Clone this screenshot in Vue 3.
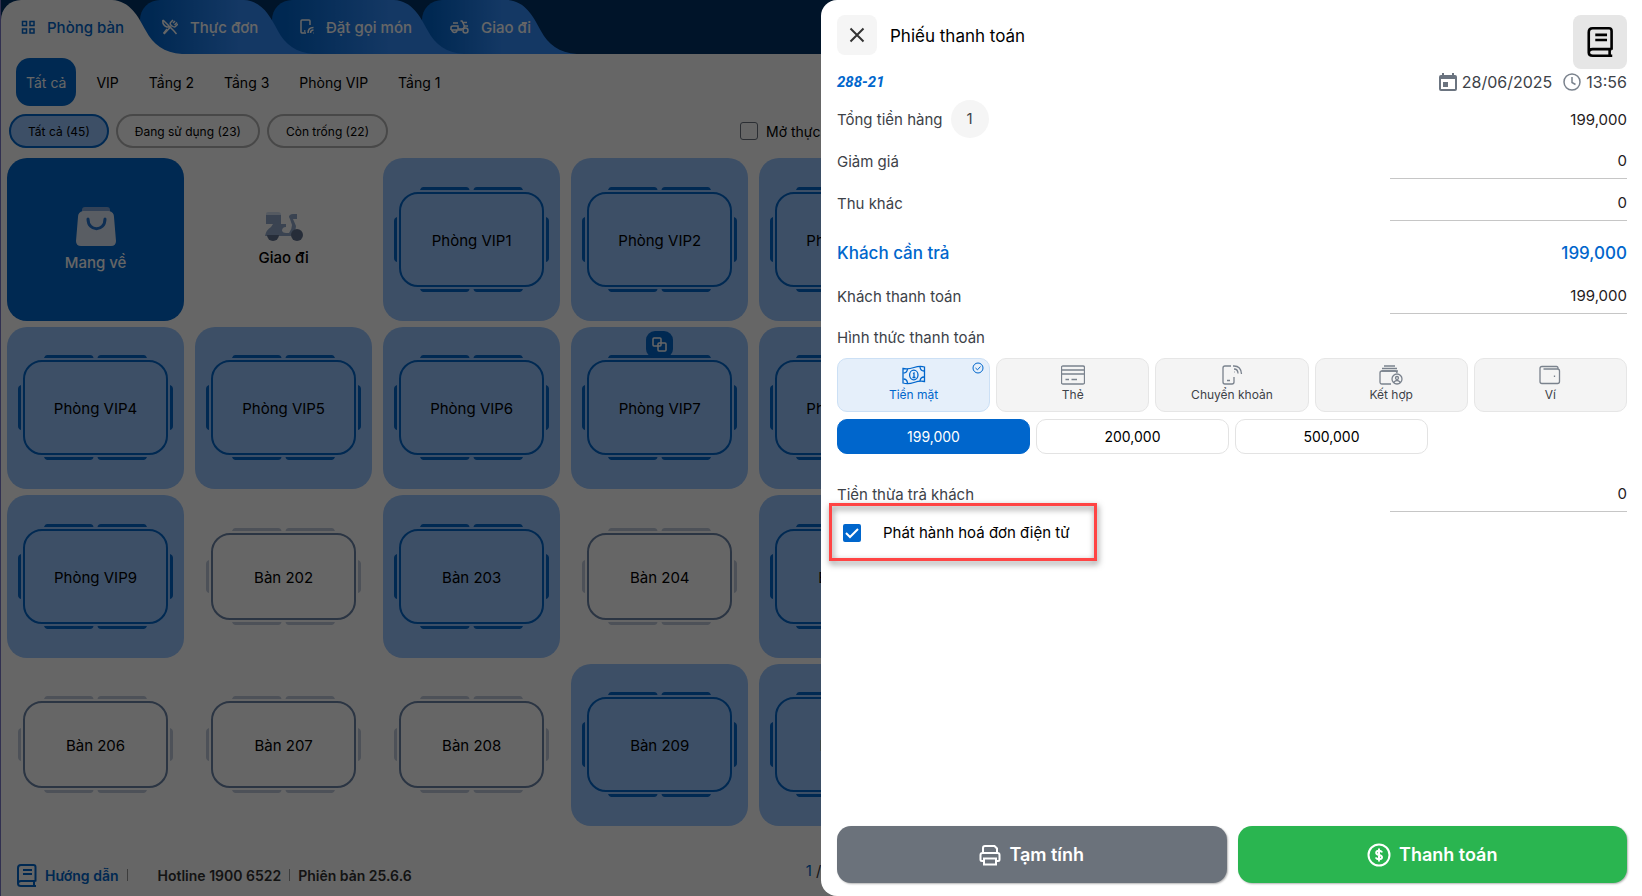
<template>
  <div class="page">
    <div class="main">
      <nav class="tabs">
        <button
          v-for="(tab, i) in tabs"
          :key="tab.name"
          type="button"
          :class="['tab', 'tab-' + tab.size, { active: i === 0 }]"
          :style="{ zIndex: 10 - i }"
        >
          <svg class="tab-tail" viewBox="0 0 76 54" aria-hidden="true">
            <path d="M0 0H6C24 1 32 16 40 31C47 44 58 53 76 54H0Z" />
          </svg>
          <svg class="tab-icon" :style="{ width: tab.w + 'px' }" :viewBox="`0 0 ${tab.w} 16`" aria-hidden="true">
            <path v-for="d in tab.paths" :key="d" :d="d" />
          </svg>
          <span>{{ tab.name }}</span>
        </button>
      </nav>

      <div class="areas">
        <button v-for="(area, i) in areas" :key="area" type="button" :class="{ selected: i === 0 }">{{ area }}</button>
      </div>

      <div class="filters">
        <button v-for="(f, i) in filters" :key="f" type="button" :class="{ selected: i === 0 }">{{ f }}</button>
        <label class="open-menu"><input type="checkbox" />Mở thực</label>
      </div>

      <div class="tables">
        <button type="button" class="tile takeaway">
          <svg width="40" height="39" viewBox="0 0 40 39" aria-hidden="true">
            <path d="M9 0H31Q34 0 34 3V6H6V3Q6 0 9 0Z" fill="#7fa6d9" />
            <path d="M7 4H33Q38 5 38 10L40 34Q40 39 35 39H5Q0 39 0 34L2 10Q2 5 7 4Z" fill="#dfe9f8" />
            <path d="M12 12C12 25 29 25 29 12" fill="none" stroke="#2474cf" stroke-width="3" stroke-linecap="round" />
          </svg>
          <span>Mang về</span>
        </button>
        <button type="button" class="tile delivery">
          <svg width="38" height="29" viewBox="0 0 38 29" aria-hidden="true">
            <path d="M1 2Q1 0 3 0H13Q16 0 16 3H1Z" fill="#d5e1f2" />
            <path d="M1 3H16V12H21V15Q17 15 17 19Q18 21 21 21H24Q27 17 27 13L25 7Q23 4 25 3Q26 2 28 2H32V7H28L31 14Q31 19 26 24H0Q1 18 6 15L8 12H1Z" fill="#91a9cb" />
            <path d="M2 23H14A6 6 0 0 1 2 23Z" fill="#60728e" />
            <circle cx="32" cy="23" r="6" fill="#60728e" />
          </svg>
          <span>Giao đi</span>
        </button>
        <button
          v-for="t in tables"
          :key="t.name"
          type="button"
          :class="['tile', t.busy ? 'busy' : 'free']"
        >
          <svg v-if="t.busy" class="shape" width="155" height="105" viewBox="0 0 155 105" aria-hidden="true">
            <rect x="6" y="6" width="143" height="93" rx="18" />
            <path d="M26 3Q27 0 29 0H72Q75 0 75.500 3ZM79.500 3Q80 0 83 0H126Q128 0 129 3ZM26 102Q27 105 29 105H72Q75 105 75.500 102ZM79.500 102Q80 105 83 105H126Q128 105 129 102ZM3 30V75Q0 74 0 71V34Q0 31 3 30ZM152 30V75Q155 74 155 71V34Q155 31 152 30Z" />
          </svg>
          <svg v-else class="shape" width="155" height="97" viewBox="0 0 155 97" aria-hidden="true">
            <rect x="6" y="6" width="143" height="85" rx="18" />
            <path d="M26 3Q27 0 29 0H72Q75 0 75.500 3ZM79.500 3Q80 0 83 0H126Q128 0 129 3ZM26 94Q27 97 29 97H72Q75 97 75.500 94ZM79.500 94Q80 97 83 97H126Q128 97 129 94ZM3 32V65Q0 64 0 61V36Q0 33 3 32ZM152 32V65Q155 64 155 61V36Q155 33 152 32Z" />
          </svg>
          <span>{{ t.name }}</span>
          <i v-if="t.merged" class="merged">
            <svg width="15" height="15" viewBox="0 0 15 15" aria-hidden="true">
              <rect x="1" y="1" width="8" height="8" rx="1" />
              <rect x="6" y="6" width="8" height="8" rx="1" />
            </svg>
          </i>
        </button>
      </div>

      <footer class="footer">
        <a href="#" class="guide">
          <svg width="20" height="23" viewBox="0 0 20 23" aria-hidden="true">
            <path :d="bookPath" />
          </svg>
          Hướng dẫn
        </a>
        <span class="hotline">Hotline 1900 6522</span>
        <span class="version">Phiên bản 25.6.6</span>
        <span class="pager"><b>1</b> /</span>
      </footer>
    </div>

    <div class="overlay"></div>

    <aside class="drawer">
      <header class="drawer-head">
        <button type="button" class="close" aria-label="Đóng">
          <svg width="16" height="16" viewBox="0 0 16 16" aria-hidden="true"><path d="M1.500 1.500L14.500 14.500M14.500 1.500L1.500 14.500" /></svg>
        </button>
        <h1>Phiếu thanh toán</h1>
        <button type="button" class="book" aria-label="Hướng dẫn">
          <svg width="27" height="30" viewBox="0 0 20 23" aria-hidden="true"><path :d="bookPath" /></svg>
        </button>
      </header>

      <div class="meta">
        <strong>288-21</strong>
        <svg width="18" height="20" viewBox="0 0 18 20" aria-hidden="true">
          <path fill="#6b7480" d="M3 1H5V3H13V1H15V3H16Q18 3 18 5V17Q18 19 16 19H2Q0 19 0 17V5Q0 3 2 3H3ZM2 7V17H16V7ZM4 10H9V15H4Z" fill-rule="evenodd" />
        </svg>
        <span class="date">28/06/2025</span>
        <svg width="18" height="18" viewBox="0 0 18 18" fill="none" stroke="#7a828d" stroke-width="1.500" aria-hidden="true">
          <circle cx="9" cy="9" r="8" /><path d="M9 4V9.500L12.500 11.500" />
        </svg>
        <span>13:56</span>
      </div>

      <div class="rows">
        <div class="row">
          <span>Tổng tiền hàng</span><span class="count">1</span>
          <span class="value">199,000</span>
        </div>
        <div class="row">
          <label for="giam_gia">Giảm giá</label>
          <input id="giam_gia" type="text" v-model="giam_gia" />
        </div>
        <div class="row">
          <label for="thu_khac">Thu khác</label>
          <input id="thu_khac" type="text" v-model="thu_khac" />
        </div>
        <div class="row due">
          <span>Khách cần trả</span>
          <span class="value">199,000</span>
        </div>
        <div class="row">
          <label for="khach_tt">Khách thanh toán</label>
          <input id="khach_tt" type="text" v-model="khach_thanh_toan" />
        </div>
        <div class="row method-title">Hình thức thanh toán</div>
      </div>

      <div class="methods">
        <button
          v-for="(m, i) in methods"
          :key="m.name"
          type="button"
          :class="{ selected: i === method }"
          @click="method = i"
        >
          <svg class="method-icon" width="24" height="20" viewBox="0 0 24 20" aria-hidden="true">
            <path v-for="d in m.paths" :key="d" :d="d" />
          </svg>
          <span>{{ m.name }}</span>
          <svg v-if="i === method" class="tick" width="12" height="12" viewBox="0 0 12 12" aria-hidden="true">
            <circle cx="6" cy="6" r="5" /><path d="M3.500 6L5.500 7.800L8.500 4.500" />
          </svg>
        </button>
      </div>

      <div class="amounts">
        <button v-for="(a, i) in amounts" :key="a" type="button" :class="{ selected: i === 0 }" @click="khach_thanh_toan = a">{{ a }}</button>
      </div>

      <div class="row">
        <label for="tien_thua">Tiền thừa trả khách</label>
        <input id="tien_thua" type="text" v-model="tien_thua" />
      </div>

      <label class="invoice">
        <input type="checkbox" v-model="hoa_don" />
        <svg v-if="hoa_don" class="check" width="18" height="18" viewBox="0 0 18 18" aria-hidden="true"><path d="M3 9L7 13L15 5" /></svg>
        Phát hành hoá đơn điện tử
      </label>

      <div class="actions">
        <button type="button" class="draft">
          <svg width="22" height="22" viewBox="0 0 22 22" aria-hidden="true">
            <path d="M4 8V4Q4 2 6 2H15.500L18 4.500V8M4 17H3Q1.500 17 1.500 15.500V11Q1.500 9 3.500 9H18.500Q20.500 9 20.500 11V15.500Q20.500 17 19 17H18M5 14.500H17V20.500H5Z" />
          </svg>
          Tạm tính
        </button>
        <button type="button" class="pay">
          <svg width="24" height="24" viewBox="0 0 24 24" aria-hidden="true">
            <circle cx="12" cy="12" r="10.500" />
            <path d="M15 9.500Q14.500 7.700 12 7.700Q9.200 7.700 9.200 9.700Q9.200 11.400 12 11.900Q15 12.400 15 14.300Q15 16.300 12 16.300Q9.400 16.300 9 14.400M12 5.500V18.500" />
          </svg>
          Thanh toán
        </button>
      </div>
    </aside>
  </div>
</template>

<script setup>
import { ref } from "vue";

const bookPath = "M18.500 17.500V3Q18.500 1 16.500 1H4Q1 1 1 4V19.500M18.500 17H4Q1 17 1 19.500Q1 22 4 22H19M17 17V22M6 6H15M6 10H15"

/* onglets du haut */
const tabs = [
  { name: "Phòng bàn", size: "l", w: 14, paths: ["M1.500 2.500H5.500V6.500H1.500ZM9 2.500H13V6.500H9ZM1.500 10H5.500V14H1.500ZM9 10H13V14H9Z"] },
  { name: "Thực đơn", size: "m", w: 16, paths: ["M1 1L12 12L14.500 15M1 1Q0 6 5 8L8 8M5 10L1.500 14.500", "M10 7Q7 5 9 3L11 1M11 4L13 2M12.500 6L15 3.500M10 7Q13 9 14 7L16 5M9 7.500L2 15"] },
  { name: "Đặt gọi món", size: "xl", w: 14, paths: ["M10 6V2Q10 1 9 1H2Q1 1 1 2V13Q1 14 2 14H6", "M4 12H5.500M8 14Q8 8.500 13.500 8.500M10.500 14Q10.500 11 13.500 11M13 14H13.500"] },
  { name: "Giao đi", size: "s", w: 19, paths: ["M3 4H8M1 11V8.500Q1 7 3 7H8V10H12Q15 9 14 6L12 2H10.500M13 3.500H17M14 7H18", "M2 11A2.500 2.500 0 0 0 7 11M1 11H12M18 11.500A2.500 2.500 0 1 1 13 11.500A2.500 2.500 0 1 1 18 11.500"] },
]
const areas = ["Tất cả", "VIP", "Tầng 2", "Tầng 3", "Phòng VIP", "Tầng 1"]
const filters = ["Tất cả (45)", "Đang sử dụng (23)", "Còn trống (22)"]

const tables = [
  { name: "Phòng VIP1", busy: true },
  { name: "Phòng VIP2", busy: true },
  { name: "Phòng VIP3", busy: true },
  { name: "Phòng VIP4", busy: true },
  { name: "Phòng VIP5", busy: true },
  { name: "Phòng VIP6", busy: true },
  { name: "Phòng VIP7", busy: true, merged: true },
  { name: "Phòng VIP8", busy: true },
  { name: "Phòng VIP9", busy: true },
  { name: "Bàn 202", busy: false },
  { name: "Bàn 203", busy: true },
  { name: "Bàn 204", busy: false },
  { name: "Bàn 205", busy: true },
  { name: "Bàn 206", busy: false },
  { name: "Bàn 207", busy: false },
  { name: "Bàn 208", busy: false },
  { name: "Bàn 209", busy: true },
  { name: "Bàn 210", busy: true },
]

/* formes de paiement */
const methods = [
  { name: "Tiền mặt", paths: ["M1 3.500Q6 4.500 12 2.500Q18 .500 22.500 2V16.500Q18 15.500 12 17.500Q6 19.500 1 18Z", "M1.500 8Q5 8 5.500 4M18 2Q18.500 6 22 6M1.500 14Q5 14 5.500 18M18 16Q18.500 12 22 12", "M16 10A4.200 4.800 0 1 1 7.600 10A4.200 4.800 0 1 1 16 10M11 8.500L12 8V12.500M10.500 12.500H13.500"] },
  { name: "Thẻ", paths: ["M2 1H22Q23.500 1 23.500 2.500V17.500Q23.500 19 22 19H2Q.500 19 .500 17.500V2.500Q.500 1 2 1ZM.500 5H23.500M.500 9H23.500", "M4.500 14.500H8M10.500 14.500H16"] },
  { name: "Chuyển khoản", paths: ["M11 1H5Q3 1 3 3V17Q3 19 5 19H12Q14 19 14 17V12M7 15.500H10M13 1H14", "M14 7H14.500M14 4Q18 4 18 8.500M14 1Q21 1 21.500 9"] },
  { name: "Kết hợp", paths: ["M5 1H16M3 3.500H18M2.500 6H19", "M12 19H3Q1 19 1 17V8Q1 6 3 6H16Q18 6 18 8", "M23 14A5 5 0 1 1 13 14A5 5 0 1 1 23 14M19.500 13A1.500 1.500 0 1 1 16.500 13A1.500 1.500 0 1 1 19.500 13M15 17Q18 14 21 17"] },
  { name: "Ví", paths: ["M20 4V3Q20 1.500 18.500 1.500H4Q2 1.500 2 3.500V16.500Q2 18.500 4 18.500H19.500Q21.500 18.500 21.500 16.500V6Q21.500 4 19.500 4H5.500", "M16.500 10.500V12"] },
]
const amounts = ["199,000", "200,000", "500,000"]

let method = ref(0)
let giam_gia = ref("0")
let thu_khac = ref("0")
let khach_thanh_toan = ref("199,000")
let tien_thua = ref("0")
let hoa_don = ref(true)
</script>

<style>
body {
  margin: 0;
  overflow: hidden;
}
</style>

<style scoped>
* {
  box-sizing: border-box;
}
.page {
  position: relative;
  height: 100vh;
  overflow: hidden;
  font-family: Inter, 'Noto Sans', sans-serif;
  font-size: 15px;
  color: #000;
}
button,
input {
  font-family: inherit;
}
button {
  border: none;
  padding: 0;
  color: inherit;
  background: none;
  cursor: pointer;
}
svg {
  flex: none;
}
.main {
  display: flex;
  flex-direction: column;
  height: 100%;
  border-left: 1px solid #7c78c8;
  background: #fff;
}

/* onglets */
.tabs {
  display: flex;
  flex: none;
  height: 54px;
  background: #003266;
}
.tab {
  position: relative;
  display: flex;
  align-items: center;
  gap: 12px;
  margin-right: -42px;
  padding-left: 28px;
  color: #fff;
  font-size: 15px;
  font-weight: 500;
  white-space: nowrap;
}
.tab::before {
  content: '';
  position: absolute;
  inset: 0 75px 0 0;
  border-radius: 20px 0 0 0;
  background: linear-gradient(90deg, #0064cc 10%, #328cfa 100%);
}
.tab-l {
  width: 181px;
  padding-left: 20px;
}
.tab-m {
  width: 174px;
  padding-left: 22px;
}
.tab-xl {
  width: 192px;
}
.tab-s {
  width: 155px;
}
.tab span,
.tab-icon {
  position: relative;
}
.tab-tail {
  position: absolute;
  top: 0;
  right: 0;
  width: 76px;
  height: 54px;
  fill: #328cfa;
}
.tab-icon {
  height: 16px;
  fill: none;
  stroke: currentColor;
  stroke-width: 1.5;
}
.tab.active {
  color: #0066cc;
}
.tab.active::before {
  background: #fff;
}
.tab.active .tab-tail {
  fill: #fff;
}

.areas {
  display: flex;
  gap: 10px;
  flex: none;
  padding: 4px 15px 8px;
}
.areas button {
  height: 48px;
  padding: 0 10px;
  border-radius: 14px;
  font-size: 14px;
}
.areas .selected {
  color: #fff;
  background: #0066cc;
}

.filters {
  display: flex;
  gap: 7px;
  flex: none;
  width: 50%;
  padding: 0 1px 0 8px;
}
.filters button {
  height: 34px;
  padding: 0 17px;
  border: 2px solid #b4b4b4;
  border-radius: 17px;
  font-size: 12px;
}
.filters .selected {
  border-color: #0066cc;
  background: #98c5ff;
}
.open-menu {
  display: flex;
  align-items: center;
  gap: 8px;
  margin-left: auto;
  white-space: nowrap;
  font-size: 14px;
}
.open-menu input {
  appearance: none;
  width: 18px;
  height: 18px;
  margin: 0;
  border: 1px solid #6b7480;
  border-radius: 3px;
}

/* plan des tables */
.tables {
  display: grid;
  grid-template-columns: repeat(5, 1fr);
  grid-auto-rows: 1fr;
  gap: 6px 11px;
  flex: 1;
  width: 57%;
  padding: 10px 0 0 6px;
}
.tile {
  position: relative;
  display: grid;
  place-items: center;
  border-radius: 20px;
  font-size: 15px;
}
.tile span {
  padding-top: 2px;
}
.tile.busy {
  background: #98c5ff;
}
.tile.busy > *,
.tile.free > * {
  grid-area: 1 / 1;
}
.shape rect {
  fill: none;
  stroke: #0066cc;
  stroke-width: 2;
}
.shape path {
  fill: #0066cc;
}
.free .shape rect {
  stroke: #6b84a8;
}
.free .shape path {
  fill: #c0cbdc;
}
.takeaway,
.delivery {
  align-content: center;
  gap: 5px;
  font-weight: 500;
}
.takeaway {
  color: #fff;
  background: #0066cc;
}
.merged {
  position: absolute;
  top: 4px;
  left: calc(50% - 14px);
  display: grid;
  place-items: center;
  width: 27px;
  height: 27px;
  border-radius: 9px;
  background: #0066cc;
}
.merged rect {
  fill: none;
  stroke: #fff;
  stroke-width: 1.5;
}

.footer {
  display: flex;
  align-items: center;
  flex: none;
  width: 50%;
  height: 70px;
  padding: 28px 0 0 16px;
  font-size: 14px;
  font-weight: 600;
  color: #333;
}
.guide {
  display: flex;
  align-items: center;
  gap: 8px;
  padding-right: 9px;
  color: #0066cc;
  text-decoration: none;
}
.guide svg {
  fill: none;
  stroke: #0066cc;
  stroke-width: 2;
}
.guide::after,
.hotline::after {
  content: '';
  width: 1px;
  height: 12px;
  background: #999;
}
.hotline {
  display: flex;
  align-items: center;
  gap: 8px;
  margin-left: 21px;
}
.version {
  margin-left: 8px;
}
.pager {
  margin-left: auto;
  padding-bottom: 10px;
  font-size: 15px;
  font-weight: 400;
}
.pager b {
  color: #0066cc;
  font-weight: 400;
}

.overlay {
  position: absolute;
  inset: 0;
  z-index: 20;
  background: rgba(0, 0, 0, 0.6);
}

/* panneau de paiement */
.drawer {
  position: absolute;
  inset: 0 0 0 50%;
  z-index: 30;
  display: flex;
  flex-direction: column;
  padding: 15px 15px 13px 16px;
  border-radius: 16px 0 0 16px;
  background: #fff;
}
.drawer-head {
  display: flex;
  height: 54px;
}
.close {
  display: grid;
  place-items: center;
  width: 40px;
  height: 40px;
  border-radius: 8px;
  background: #f5f5f5;
}
.close path {
  stroke: #333;
  stroke-width: 2;
}
h1 {
  flex: 1;
  margin: 0 0 0 13px;
  font-size: 17px;
  font-weight: 400;
  line-height: 42px;
}
.book {
  display: grid;
  place-items: center;
  width: 54px;
  height: 54px;
  border-radius: 8px;
  background: #e6e6e6;
}
.book path {
  fill: none;
  stroke: #000;
  stroke-width: 2;
}
.meta {
  display: flex;
  align-items: center;
  gap: 5px;
  height: 26px;
  color: #3d4248;
  font-size: 16px;
}
.meta strong {
  margin-right: auto;
  color: #0066cc;
  font-family: Roboto, sans-serif;
  font-size: 15px;
  font-style: italic;
}
.date {
  margin-right: 6px;
}
.rows {
  margin-top: 3px;
}
.row {
  display: flex;
  align-items: center;
  height: 42px;
  color: #3d4248;
}
.count {
  width: 38px;
  margin-left: 8px;
  border-radius: 50%;
  background: #f5f5f5;
  line-height: 38px;
  text-align: center;
}
.value {
  margin-left: auto;
  color: #1f2022;
}
.row input {
  width: 30%;
  height: 36px;
  margin-left: auto;
  padding: 0;
  border: none;
  border-bottom: 1px solid #c6c6c6;
  background: none;
  color: #1f2022;
  font-size: 15px;
  text-align: right;
}
.row.due,
.row.due .value {
  color: #0066cc;
  font-size: 17px;
  font-weight: 500;
}
.row.due {
  height: 51px;
  padding-top: 7px;
}
.row.method-title {
  height: 41px;
}
.methods {
  display: grid;
  grid-template-columns: repeat(5, 1fr);
  gap: 6px;
}
.methods button {
  position: relative;
  display: flex;
  flex-direction: column;
  align-items: center;
  height: 54px;
  padding-top: 6px;
  gap: 2px;
  border: 1px solid #e6e6e6;
  border-radius: 10px;
  background: #f4f4f4;
  color: #3d4248;
  font-size: 12px;
}
.methods svg {
  fill: none;
  stroke: #7a828d;
  stroke-width: 1.3;
}
.methods .selected {
  border-color: #cce0f5;
  background: #e5effa;
  color: #0066cc;
}
.methods .selected svg {
  stroke: #0066cc;
}
.methods .tick {
  position: absolute;
  top: 3px;
  right: 5px;
  stroke-width: 1;
}
.amounts {
  display: grid;
  grid-template-columns: repeat(4, 1fr);
  gap: 6px;
  margin: 7px 0 19px;
}
.amounts button {
  height: 35px;
  border: 1px solid #e3e3e3;
  border-radius: 10px;
  font-size: 14px;
}
.amounts .selected {
  border-color: #0066cc;
  background: #0066cc;
  color: #fff;
}
.invoice {
  position: relative;
  display: flex;
  align-items: center;
  align-self: flex-start;
  gap: 22px;
  height: 35px;
  padding: 0 28px 0 6px;
}
.invoice::after {
  content: '';
  position: absolute;
  inset: -12px 0 -11px -8px;
  border: 3px solid #ff4444;
  filter: drop-shadow(1px 3px 3px rgba(0, 0, 0, 0.5));
  pointer-events: none;
}
.invoice input {
  appearance: none;
  width: 18px;
  height: 18px;
  margin: 0;
  border: 2px solid #0066cc;
  border-radius: 2px;
}
.invoice input:checked {
  background: #0066cc;
}
.check {
  position: absolute;
  left: 6px;
  fill: none;
  stroke: #fff;
  stroke-width: 2;
  pointer-events: none;
}
.actions {
  display: grid;
  grid-template-columns: 1fr 1fr;
  gap: 11px;
  margin-top: auto;
}
.actions button {
  display: flex;
  align-items: center;
  justify-content: center;
  gap: 8px;
  height: 57px;
  border-radius: 14px;
  box-shadow: 1px 1px 2px rgba(0, 0, 0, 0.3);
  color: #fff;
  font-size: 18px;
  font-weight: 600;
}
.draft {
  background: #6b727b;
}
.pay {
  background: #2ab550;
}
.actions svg {
  fill: none;
  stroke: #fff;
  stroke-width: 2;
}
</style>
